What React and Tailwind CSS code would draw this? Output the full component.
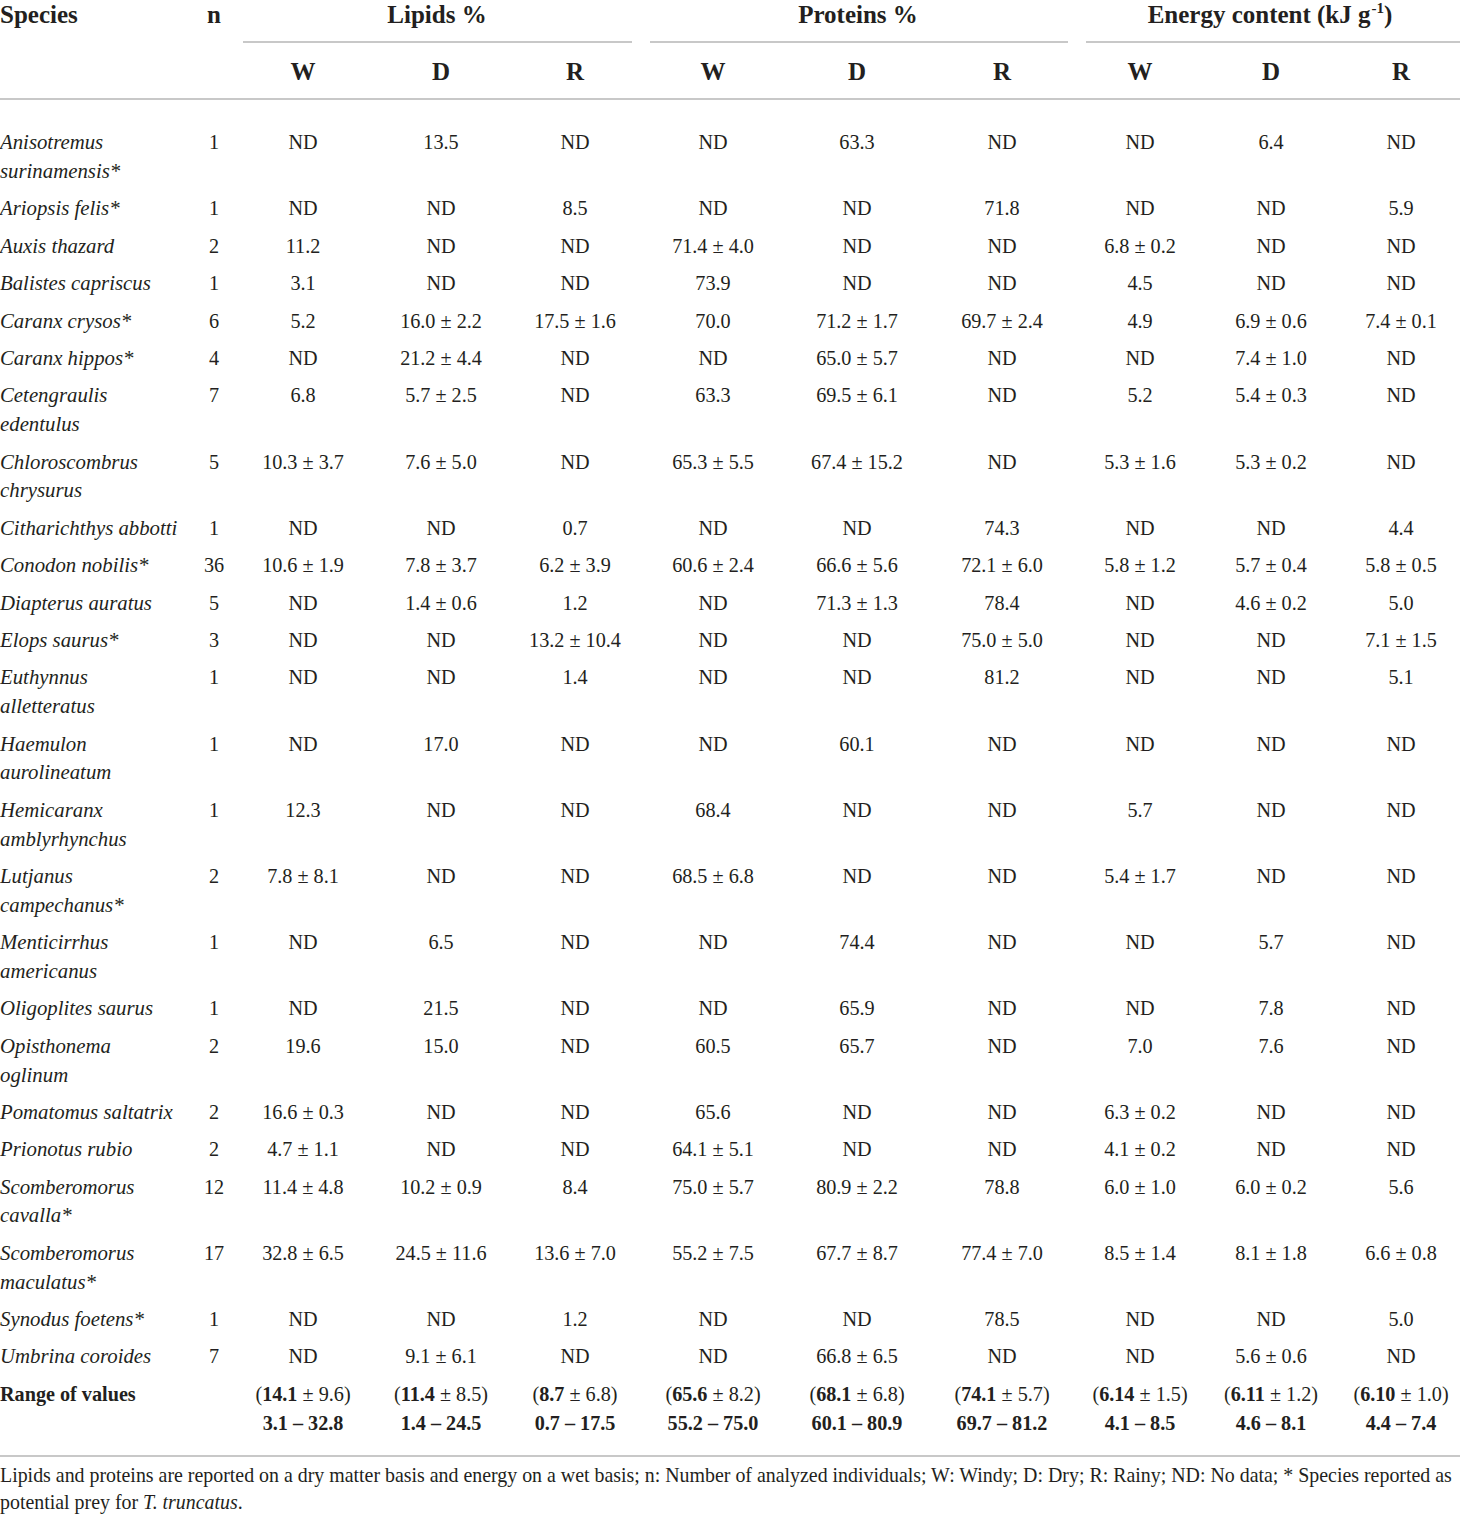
import React from "react";

const cols = "grid grid-cols-[190px_48px_130px_146px_122px_154px_134px_156px_120px_142px_118px]";

const rows = [
  [["Anisotremus", "surinamensis*"], "1", "ND", "13.5", "ND", "ND", "63.3", "ND", "ND", "6.4", "ND"],
  [["Ariopsis felis*"], "1", "ND", "ND", "8.5", "ND", "ND", "71.8", "ND", "ND", "5.9"],
  [["Auxis thazard"], "2", "11.2", "ND", "ND", "71.4 ± 4.0", "ND", "ND", "6.8 ± 0.2", "ND", "ND"],
  [["Balistes capriscus"], "1", "3.1", "ND", "ND", "73.9", "ND", "ND", "4.5", "ND", "ND"],
  [["Caranx crysos*"], "6", "5.2", "16.0 ± 2.2", "17.5 ± 1.6", "70.0", "71.2 ± 1.7", "69.7 ± 2.4", "4.9", "6.9 ± 0.6", "7.4 ± 0.1"],
  [["Caranx hippos*"], "4", "ND", "21.2 ± 4.4", "ND", "ND", "65.0 ± 5.7", "ND", "ND", "7.4 ± 1.0", "ND"],
  [["Cetengraulis", "edentulus"], "7", "6.8", "5.7 ± 2.5", "ND", "63.3", "69.5 ± 6.1", "ND", "5.2", "5.4 ± 0.3", "ND"],
  [["Chloroscombrus", "chrysurus"], "5", "10.3 ± 3.7", "7.6 ± 5.0", "ND", "65.3 ± 5.5", "67.4 ± 15.2", "ND", "5.3 ± 1.6", "5.3 ± 0.2", "ND"],
  [["Citharichthys abbotti"], "1", "ND", "ND", "0.7", "ND", "ND", "74.3", "ND", "ND", "4.4"],
  [["Conodon nobilis*"], "36", "10.6 ± 1.9", "7.8 ± 3.7", "6.2 ± 3.9", "60.6 ± 2.4", "66.6 ± 5.6", "72.1 ± 6.0", "5.8 ± 1.2", "5.7 ± 0.4", "5.8 ± 0.5"],
  [["Diapterus auratus"], "5", "ND", "1.4 ± 0.6", "1.2", "ND", "71.3 ± 1.3", "78.4", "ND", "4.6 ± 0.2", "5.0"],
  [["Elops saurus*"], "3", "ND", "ND", "13.2 ± 10.4", "ND", "ND", "75.0 ± 5.0", "ND", "ND", "7.1 ± 1.5"],
  [["Euthynnus", "alletteratus"], "1", "ND", "ND", "1.4", "ND", "ND", "81.2", "ND", "ND", "5.1"],
  [["Haemulon", "aurolineatum"], "1", "ND", "17.0", "ND", "ND", "60.1", "ND", "ND", "ND", "ND"],
  [["Hemicaranx", "amblyrhynchus"], "1", "12.3", "ND", "ND", "68.4", "ND", "ND", "5.7", "ND", "ND"],
  [["Lutjanus", "campechanus*"], "2", "7.8 ± 8.1", "ND", "ND", "68.5 ± 6.8", "ND", "ND", "5.4 ± 1.7", "ND", "ND"],
  [["Menticirrhus", "americanus"], "1", "ND", "6.5", "ND", "ND", "74.4", "ND", "ND", "5.7", "ND"],
  [["Oligoplites saurus"], "1", "ND", "21.5", "ND", "ND", "65.9", "ND", "ND", "7.8", "ND"],
  [["Opisthonema", "oglinum"], "2", "19.6", "15.0", "ND", "60.5", "65.7", "ND", "7.0", "7.6", "ND"],
  [["Pomatomus saltatrix"], "2", "16.6 ± 0.3", "ND", "ND", "65.6", "ND", "ND", "6.3 ± 0.2", "ND", "ND"],
  [["Prionotus rubio"], "2", "4.7 ± 1.1", "ND", "ND", "64.1 ± 5.1", "ND", "ND", "4.1 ± 0.2", "ND", "ND"],
  [["Scomberomorus", "cavalla*"], "12", "11.4 ± 4.8", "10.2 ± 0.9", "8.4", "75.0 ± 5.7", "80.9 ± 2.2", "78.8", "6.0 ± 1.0", "6.0 ± 0.2", "5.6"],
  [["Scomberomorus", "maculatus*"], "17", "32.8 ± 6.5", "24.5 ± 11.6", "13.6 ± 7.0", "55.2 ± 7.5", "67.7 ± 8.7", "77.4 ± 7.0", "8.5 ± 1.4", "8.1 ± 1.8", "6.6 ± 0.8"],
  [["Synodus foetens*"], "1", "ND", "ND", "1.2", "ND", "ND", "78.5", "ND", "ND", "5.0"],
  [["Umbrina coroides"], "7", "ND", "9.1 ± 6.1", "ND", "ND", "66.8 ± 6.5", "ND", "ND", "5.6 ± 0.6", "ND"],
];

const ranges = [
  ["14.1", "9.6", "3.1 – 32.8"],
  ["11.4", "8.5", "1.4 – 24.5"],
  ["8.7", "6.8", "0.7 – 17.5"],
  ["65.6", "8.2", "55.2 – 75.0"],
  ["68.1", "6.8", "60.1 – 80.9"],
  ["74.1", "5.7", "69.7 – 81.2"],
  ["6.14", "1.5", "4.1 – 8.5"],
  ["6.11", "1.2", "4.6 – 8.1"],
  ["6.10", "1.0", "4.4 – 7.4"],
];

function Row({ r }) {
  const [name, ...vals] = r;
  return (
    <div className={`${cols} py-[4.3px] leading-[28.8px]`}>
      <div className="italic text-[20.8px] whitespace-nowrap">
        {name.map((n, i) => (
          <div key={i}>{n}</div>
        ))}
      </div>
      {vals.map((v, i) => (
        <div key={i} className="text-center whitespace-nowrap">{v}</div>
      ))}
    </div>
  );
}

export default function App() {
  return (
    <div className="w-[1460px] bg-white text-[#231f20] font-['Liberation_Serif',serif]">
      {/* header */}
      <div className="text-[25px] font-bold">
        <div className="grid grid-cols-[190px_48px_398px_444px_380px] leading-[30px]">
          <div className="h-[41px]">Species</div>
          <div className="text-center">n</div>
          <div className="flex flex-col">
            <div className="h-[41px] text-center">Lipids %</div>
            <div className="h-[2px] bg-[#c8c8c8] ml-[5px] mr-[4px]" />
          </div>
          <div className="flex flex-col">
            <div className="h-[41px] text-center">Proteins %</div>
            <div className="h-[2px] bg-[#c8c8c8] ml-[14px] mr-[12px]" />
          </div>
          <div className="flex flex-col">
            <div className="h-[41px] text-center">
              Energy content (kJ g<span className="text-[15px] relative -top-[10px] ml-[1px]">-1</span>)
            </div>
            <div className="h-[2px] bg-[#c8c8c8] ml-[6px]" />
          </div>
        </div>
        <div className={`${cols} h-[55px] pt-[14px] leading-[30px]`}>
          <div />
          <div />
          {["W", "D", "R", "W", "D", "R", "W", "D", "R"].map((h, i) => (
            <div key={i} className="text-center">{h}</div>
          ))}
        </div>
        <div className="h-[2px] bg-[#c8c8c8]" />
      </div>

      {/* body */}
      <div className="text-[20.2px] pt-[24px]">
        {rows.map((r, i) => (
          <Row key={i} r={r} />
        ))}
        <div className={`${cols} py-[4.3px] leading-[28.8px]`}>
          <div className="font-bold whitespace-nowrap">Range of values</div>
          <div />
          {ranges.map(([m, sd, rg], i) => (
            <div key={i} className="text-center whitespace-nowrap">
              <div>
                (<span className="font-bold">{m}</span> ± {sd})
              </div>
              <div className="font-bold">{rg}</div>
            </div>
          ))}
        </div>
      </div>

      <div className="h-[2px] bg-[#c8c8c8] mt-[13px]" />

      {/* footnote */}
      <div className="text-[19.9px] leading-[27px] pt-[5px] pb-[10px]">
        <div className="whitespace-nowrap">
          Lipids and proteins are reported on a dry matter basis and energy on a wet basis; n: Number of analyzed
          individuals; W: Windy; D: Dry; R: Rainy; ND: No data; * Species reported as
        </div>
        <div>
          potential prey for <span className="italic">T. truncatus</span>.
        </div>
      </div>
    </div>
  );
}
